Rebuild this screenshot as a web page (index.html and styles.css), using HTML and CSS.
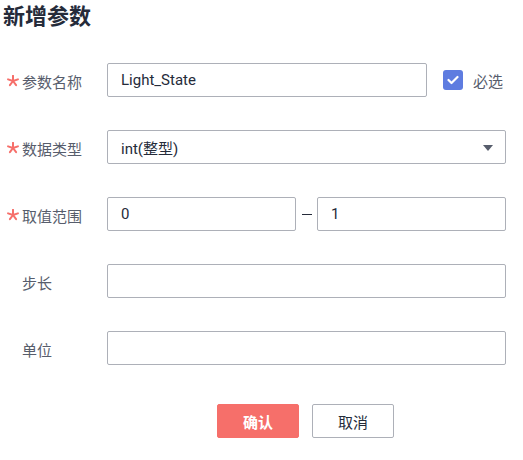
FILE: index.html
```html
<!DOCTYPE html>
<html>
<head>
<meta charset="utf-8">
<link rel="stylesheet" href="styles.css">
</head>
<body>
<div class="page">
  <h1 class="title">新增参数</h1>
  <div class="form">
    <div class="row">
      <div class="label"><svg class="star" width="12" height="12" viewBox="-6 -6 12 12"><g stroke="#f66f6a" stroke-width="2" stroke-linecap="round"><line x1="0" y1="0" x2="0" y2="-5.2"/><line x1="0" y1="0" x2="4.9" y2="-1.6"/><line x1="0" y1="0" x2="3.1" y2="4.2"/><line x1="0" y1="0" x2="-3.1" y2="4.2"/><line x1="0" y1="0" x2="-4.9" y2="-1.6"/></g></svg>参数名称</div>
      <div class="input w-name">Light_State</div>
      <div class="check">
        <span class="box"><svg width="12" height="10" viewBox="0 0 12 10"><path d="M1.5 5 L4.5 8 L10.5 2" fill="none" stroke="#fff" stroke-width="2.2" stroke-linecap="round" stroke-linejoin="round"/></svg></span>
        <span class="check-text">必选</span>
      </div>
    </div>
    <div class="row">
      <div class="label"><svg class="star" width="12" height="12" viewBox="-6 -6 12 12"><g stroke="#f66f6a" stroke-width="2" stroke-linecap="round"><line x1="0" y1="0" x2="0" y2="-5.2"/><line x1="0" y1="0" x2="4.9" y2="-1.6"/><line x1="0" y1="0" x2="3.1" y2="4.2"/><line x1="0" y1="0" x2="-3.1" y2="4.2"/><line x1="0" y1="0" x2="-4.9" y2="-1.6"/></g></svg>数据类型</div>
      <div class="input w-full select">int(整型)<span class="caret"></span></div>
    </div>
    <div class="row">
      <div class="label"><svg class="star" width="12" height="12" viewBox="-6 -6 12 12"><g stroke="#f66f6a" stroke-width="2" stroke-linecap="round"><line x1="0" y1="0" x2="0" y2="-5.2"/><line x1="0" y1="0" x2="4.9" y2="-1.6"/><line x1="0" y1="0" x2="3.1" y2="4.2"/><line x1="0" y1="0" x2="-3.1" y2="4.2"/><line x1="0" y1="0" x2="-4.9" y2="-1.6"/></g></svg>取值范围</div>
      <div class="input w-half">0</div>
      <div class="dash"><span></span></div>
      <div class="input w-half">1</div>
    </div>
    <div class="row">
      <div class="label plain">步长</div>
      <div class="input w-full"></div>
    </div>
    <div class="row">
      <div class="label plain">单位</div>
      <div class="input w-full"></div>
    </div>
    <div class="actions">
      <button class="btn primary">确认</button>
      <button class="btn">取消</button>
    </div>
  </div>
</div>
</body>
</html>
```
FILE: styles.css
```css
html, body {
  margin: 0;
  padding: 0;
  background: #fff;
}
body {
  font-family: Roboto, "Noto Sans CJK SC", sans-serif;
  color: #333;
  font-size: 14px;
}
.title {
  margin: 0;
  padding: 4px 0 0 3px;
  font-size: 22px;
  line-height: 26px;
  font-weight: 700;
  color: #252b3a;
  height: 32px;
}
.form {
  display: flex;
  flex-direction: column;
  gap: 33px;
  margin-top: 27px;
}
.row {
  display: flex;
  align-items: center;
  height: 34px;
}
.label {
  width: 100px;
  padding-left: 7px;
  display: flex;
  align-items: center;
  color: #575d6c;
  font-size: 15px;
  padding-top: 2px;
}
.label.plain {
  padding-left: 22px;
  width: 85px;
}
.star {
  margin-right: 3px;
  flex: none;
}
.input {
  box-sizing: border-box;
  height: 34px;
  border: 1px solid #adb0b8;
  border-radius: 2px;
  padding: 0 13px;
  display: flex;
  align-items: center;
  color: #252b3a;
  font-size: 15px;
  position: relative;
}
.w-name { width: 320px; }
.w-full { width: 399px; }
.w-half { width: 189px; }
.select .caret {
  position: absolute;
  right: 12px;
  top: 14px;
  width: 0;
  height: 0;
  border-left: 5px solid transparent;
  border-right: 5px solid transparent;
  border-top: 6px solid #575d6c;
}
.check {
  display: flex;
  align-items: center;
  margin-left: 16px;
}
.box {
  width: 20px;
  height: 20px;
  border-radius: 3px;
  background: #5e7ce0;
  display: flex;
  align-items: center;
  justify-content: center;
}
.check-text {
  margin-left: 10px;
  color: #575d6c;
  font-size: 15px;
}
.dash {
  width: 21px;
  display: flex;
  justify-content: center;
}
.dash span {
  width: 10px;
  height: 1px;
  background: #252b3a;
  margin-left: 1px;
}
.actions {
  display: flex;
  gap: 13px;
  padding-left: 217px;
  margin-top: 6px;
}
.btn {
  box-sizing: border-box;
  width: 82px;
  height: 34px;
  border: 1px solid #adb0b8;
  border-radius: 2px;
  background: #fff;
  color: #252b3a;
  font-family: Roboto, "Noto Sans CJK SC", sans-serif;
  font-size: 15px;
  padding: 0;
}
.btn.primary {
  background: #f66f6a;
  border-color: #f66f6a;
  color: #fff;
  font-weight: 700;
}
```
